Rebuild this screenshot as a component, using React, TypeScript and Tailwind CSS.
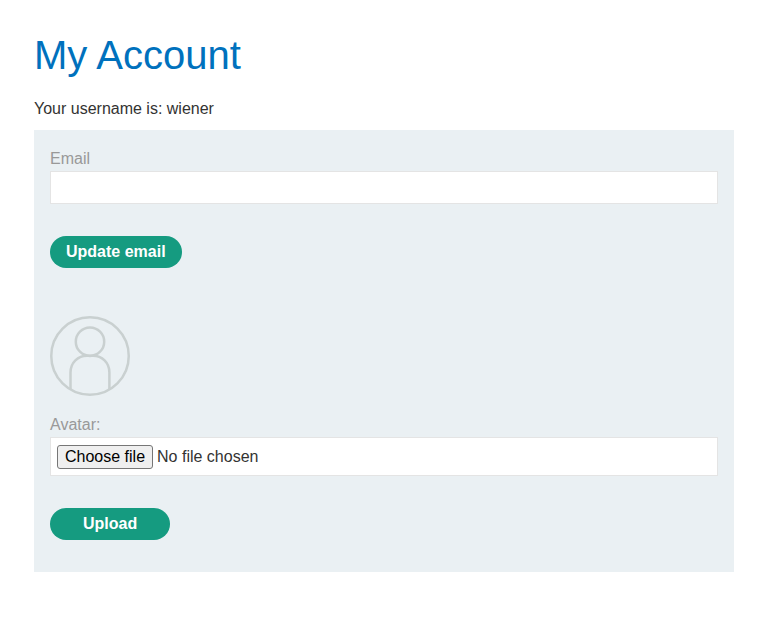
import { useState } from "react";

const labelClass = "block text-base leading-[25px] text-[#999999]";
const buttonClass =
  "mt-8 block h-8 cursor-pointer rounded-full bg-[#159b80] text-base leading-8 font-bold text-white hover:bg-[#128068]";

function DefaultAvatar() {
  return (
    <svg
      className="mb-4 block size-20"
      viewBox="0 0 80 80"
      fill="none"
      stroke="#c9d0d0"
      strokeWidth="2.5"
      role="img"
      aria-label="Avatar"
    >
      <circle cx="40" cy="40" r="38.75" />
      <circle cx="40" cy="25.7" r="14.2" />
      <path d="M20.5 73.5V56.5C20.5 46.5 28 39.7 37 39.7H43C52 39.7 59.4 46.5 59.4 56.5V73.5" />
    </svg>
  );
}

export default function App() {
  const [email, setEmail] = useState("");
  const [fileName, setFileName] = useState("");

  return (
    <main className="mx-auto max-w-[769px] py-8 pr-[35px] pl-[34px] font-['Liberation_Sans',Arial,sans-serif] text-base text-[#333332]">
      <h1 className="text-[40px] leading-[46px] text-[#0071bd]">My Account</h1>
      <p className="mt-[19px] leading-6">Your username is: wiener</p>
      <div className="mt-[9px] bg-[#eaf0f3] px-4 pt-4 pb-8">
        <form onSubmit={(e) => e.preventDefault()}>
          <label htmlFor="email" className={labelClass}>
            Email
          </label>
          <input
            id="email"
            type="email"
            required
            value={email}
            onChange={(e) => setEmail(e.target.value)}
            className="block h-[33px] w-full border border-[#e4e4e4] bg-white px-2"
          />
          <button type="submit" className={`${buttonClass} px-4`}>
            Update email
          </button>
        </form>
        <form className="mt-12" onSubmit={(e) => e.preventDefault()}>
          <DefaultAvatar />
          <label htmlFor="avatar" className={labelClass}>
            Avatar:
          </label>
          <div className="relative flex h-[39px] items-center gap-1 border border-[#e4e4e4] bg-white px-1.5 focus-within:outline">
            <span className="h-6 rounded-[3px] border border-[#767676] bg-[#efefef] px-[7px] leading-[22px] text-black">
              Choose file
            </span>
            <span>{fileName || "No file chosen"}</span>
            <input
              id="avatar"
              type="file"
              onChange={(e) => setFileName(e.target.files?.[0]?.name ?? "")}
              className="absolute inset-0 cursor-pointer opacity-0"
            />
          </div>
          <button type="submit" className={`${buttonClass} px-[33px]`}>
            Upload
          </button>
        </form>
      </div>
    </main>
  );
}
